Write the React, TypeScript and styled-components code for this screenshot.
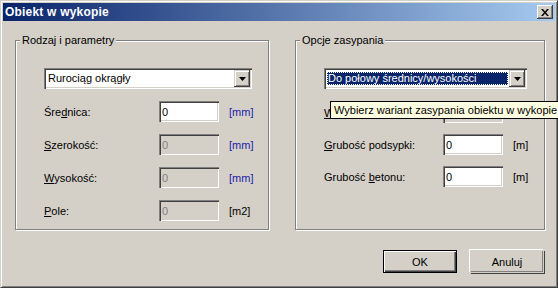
import React from 'react';
import styled, { createGlobalStyle } from 'styled-components';

const GlobalStyle = createGlobalStyle`
	html, body {
		margin: 0;
		padding: 0;
		background: #d4d0c8;
	}
	body {
		font-family: 'Liberation Sans', Arial, sans-serif;
		font-size: 11px;
		color: #000;
	}
`;

interface RowProps {
	label: React.ReactNode;
	value: string;
	unit: string;
	blueUnit?: boolean;
	disabled?: boolean;
}

function FieldRow({ label, value, unit, blueUnit, disabled, labelWidth }: RowProps & { labelWidth: number }) {
	return (
		<Row $labelWidth={labelWidth}>
			<Label>{label}</Label>
			<TextInput value={value} readOnly disabled={disabled} />
			<Unit $blue={blueUnit}>{unit}</Unit>
		</Row>
	);
}

function Combo({ text, width, selected }: { text: string; width: number; selected?: boolean }) {
	return (
		<ComboBox $width={width}>
			<ComboField>
				<ComboText $selected={selected}>{text}</ComboText>
			</ComboField>
			<ComboArrow>
				<svg width="7" height="4" viewBox="0 0 7 4">
					<path d="M0 0h7L3.5 4z" fill="#000" />
				</svg>
			</ComboArrow>
		</ComboBox>
	);
}

export default function App() {
	return (
		<>
			<GlobalStyle />
			<Window>
				<TitleBar>
					<Title>Obiekt w wykopie</Title>
					<CloseButton>
						<svg width="8" height="7" viewBox="0 0 8 7">
							<path d="M0 0h2l2 2.5L6 0h2L5 3.5 8 7H6L4 4.5 2 7H0l3-3.5z" fill="#000" />
						</svg>
					</CloseButton>
				</TitleBar>

				<Groups>
					<GroupBox $width={254}>
						<Legend>Rodzaj i parametry</Legend>
						<Fields $gap={12}>
							<Combo text="Rurociąg okrągły" width={208} />
							<FieldRow
								labelWidth={105}
								label={<>Śre<u>d</u>nica:</>}
								value="0"
								unit="[mm]"
								blueUnit
							/>
							<FieldRow
								labelWidth={105}
								label={<><u>S</u>zerokość:</>}
								value="0"
								unit="[mm]"
								blueUnit
								disabled
							/>
							<FieldRow
								labelWidth={105}
								label={<><u>W</u>ysokość:</>}
								value="0"
								unit="[mm]"
								blueUnit
								disabled
							/>
							<FieldRow
								labelWidth={105}
								label={<><u>P</u>ole:</>}
								value="0"
								unit="[m2]"
								disabled
							/>
						</Fields>
					</GroupBox>

					<GroupBox $width={250}>
						<Legend>Opcje zasypania</Legend>
						<Fields $gap={11}>
							<Combo text="Do połowy średnicy/wysokości" width={203} selected />
							<FieldRow
								labelWidth={109}
								label={<><u>W</u>ysokość zasypki:</>}
								value=""
								unit="[m]"
								disabled
							/>
							<FieldRow
								labelWidth={109}
								label={<><u>G</u>rubość podsypki:</>}
								value="0"
								unit="[m]"
							/>
							<FieldRow
								labelWidth={109}
								label={<>Grubość <u>b</u>etonu:</>}
								value="0"
								unit="[m]"
							/>
						</Fields>
					</GroupBox>
				</Groups>

				<ButtonRow>
					<Button $isDefault>OK</Button>
					<Button>Anuluj</Button>
				</ButtonRow>

				<Tooltip>Wybierz wariant zasypania obiektu w wykopie</Tooltip>
			</Window>
		</>
	);
}

const Window = styled.div`
	position: relative;
	box-sizing: border-box;
	width: 558px;
	height: 288px;
	padding: 2px;
	background: #d4d0c8;
	border-top: 1px solid #d4d0c8;
	border-left: 1px solid #d4d0c8;
	border-right: 1px solid #404040;
	border-bottom: 1px solid #404040;
	box-shadow: inset 1px 1px 0 #fff, inset -1px -1px 0 #808080;
	display: flex;
	flex-direction: column;
`;

const TitleBar = styled.div`
	height: 18px;
	display: flex;
	align-items: center;
	justify-content: space-between;
	padding: 0 2px 0 2px;
	background: linear-gradient(to right, #0a246a, #a6caf0);
`;

const Title = styled.span`
	color: #fff;
	font-weight: bold;
	font-size: 12px;
	letter-spacing: 0.2px;
`;

const CloseButton = styled.button`
	box-sizing: border-box;
	width: 16px;
	height: 14px;
	padding: 0;
	display: flex;
	align-items: center;
	justify-content: center;
	background: #d4d0c8;
	border: 0;
	box-shadow: inset -1px -1px 0 #404040, inset 1px 1px 0 #fff, inset -2px -2px 0 #808080;
`;

const Groups = styled.div`
	display: flex;
	gap: 26px;
	margin: 13px 0 0 12px;
`;

const GroupBox = styled.fieldset<{ $width: number }>`
	box-sizing: border-box;
	width: ${({ $width }) => $width}px;
	height: 196px;
	margin: 0;
	padding: 21px 0 0 28px;
	border: 1px solid #808080;
	box-shadow: 1px 1px 0 #fff, inset 1px 1px 0 #fff;
	min-width: 0;
`;

const Legend = styled.legend`
	margin-left: -24px;
	padding: 0 2px;
	line-height: 13px;
	background: #d4d0c8;
`;

const Fields = styled.div<{ $gap: number }>`
	display: flex;
	flex-direction: column;
	gap: ${({ $gap }) => $gap}px;

	& > :first-child {
		margin-bottom: ${({ $gap }) => (24 - $gap * 2)}px;
	}
`;

const ComboBox = styled.div<{ $width: number }>`
	box-sizing: border-box;
	width: ${({ $width }) => $width}px;
	height: 21px;
	display: flex;
	align-items: stretch;
	padding: 2px;
	background: #fff;
	box-shadow: inset 1px 1px 0 #808080, inset 2px 2px 0 #404040, inset -1px -1px 0 #fff, inset -2px -2px 0 #d4d0c8;
`;

const ComboField = styled.div`
	flex: 1;
	display: flex;
	align-items: center;
	padding: 1px;
`;

const ComboText = styled.span<{ $selected?: boolean }>`
	flex: 1;
	height: 13px;
	line-height: 13px;
	padding: 0 1px 0 1px;
	white-space: nowrap;
	color: ${({ $selected }) => ($selected ? '#fff' : '#000')};
	background: ${({ $selected }) => ($selected ? '#0a246a' : 'transparent')};
	outline: ${({ $selected }) => ($selected ? '1px dotted #fff' : 'none')};
	outline-offset: -1px;
`;

const ComboArrow = styled.div`
	box-sizing: border-box;
	width: 16px;
	display: flex;
	align-items: center;
	justify-content: center;
	background: #d4d0c8;
	box-shadow: inset -1px -1px 0 #404040, inset 1px 1px 0 #d4d0c8, inset 2px 2px 0 #fff, inset -2px -2px 0 #808080;
`;

const Row = styled.div<{ $labelWidth: number }>`
	display: grid;
	grid-template-columns: ${({ $labelWidth }) => $labelWidth}px auto auto;
	column-gap: 10px;
	align-items: center;
	justify-content: start;
	height: 21px;
`;

const Label = styled.span`
	white-space: nowrap;
`;

const TextInput = styled.input`
	box-sizing: border-box;
	width: 60px;
	height: 21px;
	margin: 0;
	padding: 0 3px;
	font: inherit;
	color: #000;
	background: #fff;
	border: 0;
	outline: none;
	box-shadow: inset 1px 1px 0 #808080, inset 2px 2px 0 #404040, inset -1px -1px 0 #fff, inset -2px -2px 0 #d4d0c8;

	&:disabled {
		color: #808080;
		-webkit-text-fill-color: #808080;
		background: #d4d0c8;
	}
`;

const Unit = styled.span<{ $blue?: boolean }>`
	color: ${({ $blue }) => ($blue ? '#1b1ba8' : '#000')};
`;

const ButtonRow = styled.div`
	display: flex;
	justify-content: flex-end;
	gap: 13px;
	margin: 20px 11px 0 0;
`;

const Button = styled.button<{ $isDefault?: boolean }>`
	box-sizing: border-box;
	width: 74px;
	height: 23px;
	padding: 0;
	font: inherit;
	color: #000;
	background: #d4d0c8;
	border: 1px solid ${({ $isDefault }) => ($isDefault ? '#000' : 'transparent')};
	box-shadow: ${({ $isDefault }) =>
		$isDefault
			? 'inset 1px 1px 0 #fff, inset -1px -1px 0 #404040, inset -2px -2px 0 #808080'
			: '-1px -1px 0 #fff, 1px 1px 0 #404040, inset -1px -1px 0 #808080'};
`;

const Tooltip = styled.div`
	position: absolute;
	left: 329px;
	top: 100px;
	box-sizing: border-box;
	height: 18px;
	padding: 0 3px 0 3px;
	display: flex;
	align-items: center;
	white-space: nowrap;
	background: #ffffe1;
	border: 1px solid #000;
`;
